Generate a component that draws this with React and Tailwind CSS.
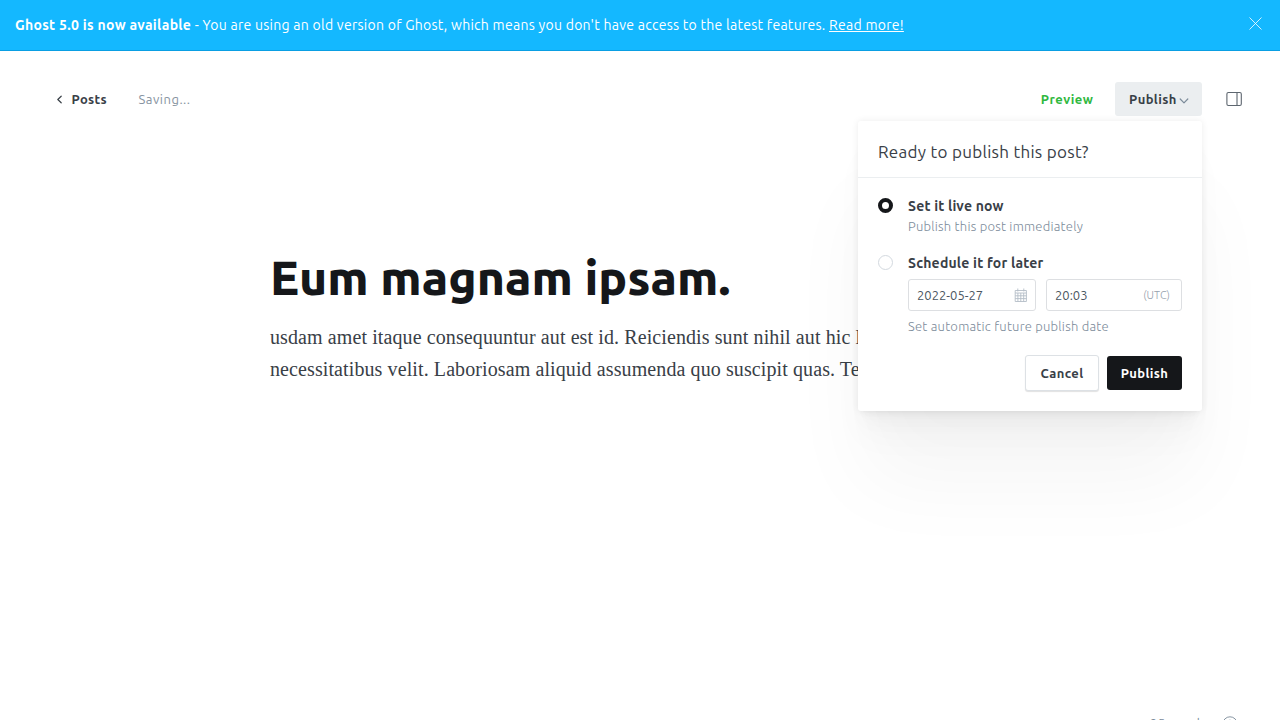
import React from "react";

function Banner() {
  return (
    <div className="flex h-[51px] shrink-0 items-center justify-between border-b border-[#0a9fe3] bg-[#14b8ff] pr-[18px] pl-[15px] text-[14px] text-white">
      <p className="tracking-[0.27px]">
        <strong className="font-bold tracking-[0.3px]">Ghost 5.0 is now available</strong> - You are using an old version of Ghost, which
        means you don't have access to the latest features.{" "}
        <a className="underline">Read more!</a>
      </p>
      <svg className="-mt-[3px] size-[13px]" viewBox="0 0 13 13" fill="none" stroke="currentColor" strokeWidth="0.8">
        <path d="M0.5 0.5l12 12M12.5 0.5l-12 12" />
      </svg>
    </div>
  );
}

function Toolbar() {
  return (
    <header className="flex h-[34px] items-center justify-between pr-[37px] pl-[56px] text-[13px]">
      <div className="flex items-center">
        <svg className="h-[9px] w-[7px]" viewBox="0 0 7 9" fill="none" stroke="#394047" strokeWidth="1.2" strokeLinecap="round" strokeLinejoin="round">
          <path d="M5.2 1.2L1.8 4.5l3.4 3.3" />
        </svg>
        <span className="mt-px ml-[8.5px] font-[570] tracking-[0.35px]">Posts</span>
        <span className="mt-px ml-[31.5px] tracking-[0.5px] text-[#8794a1]">Saving...</span>
      </div>
      <div className="flex items-center">
        <span className="mt-px mr-[21.5px] font-[570] tracking-[0.5px] text-[#30b840]">Preview</span>
        <button className="mr-[23px] flex h-[34px] w-[87px] items-center rounded-[3px] bg-[#ebeef0] pl-[14px] font-[570] tracking-[0.4px]">
          <span className="mt-px">Publish</span>
          <svg className="mt-[3px] ml-[2px] h-[6px] w-[10px]" viewBox="0 0 10 6" fill="none" stroke="#7c8b9a" strokeWidth="1.2" strokeLinecap="round" strokeLinejoin="round">
            <path d="M1.2 1L5 4.8 8.8 1" />
          </svg>
        </button>
        <svg className="h-[16px] w-[18px]" viewBox="0 0 18 16" fill="none" stroke="#5d666f" strokeWidth="1.1">
          <rect x="1.9" y="1.5" width="14.4" height="13" rx="1.5" />
          <path d="M12 1.5v13" />
        </svg>
      </div>
    </header>
  );
}

function CalendarIcon() {
  return (
    <svg className="h-[14px] w-[13px]" viewBox="0 0 13 14" fill="none" stroke="#b4bdc7" strokeWidth="0.9">
      <path d="M1.2 2.5h11.2v11H1.2zM1.2 5h11.2M1.2 7.8h11.2M1.2 10.6h11.2M3.9 5v8.5M6.8 5v8.5M9.7 5v8.5M3.8 0.5v3M9.8 0.5v3" />
    </svg>
  );
}

function PublishMenu() {
  return (
    <div className="absolute top-[121px] left-[858px] h-[290px] w-[344px] rounded-[3px] bg-white shadow-[0_0_7px_rgba(0,0,0,0.08),0_2.1px_2.2px_-5px_rgba(0,0,0,0.011),0_5.1px_5.3px_-5px_rgba(0,0,0,0.016),0_9.5px_10px_-5px_rgba(0,0,0,0.02),0_17px_17.9px_-5px_rgba(0,0,0,0.024),0_31.8px_33.4px_-5px_rgba(0,0,0,0.029),0_76px_80px_-5px_rgba(0,0,0,0.04)]">
      <h3 className="h-[57px] border-b border-[#ebeef0] pt-[19px] pl-[20px] text-[17px] leading-[24px] tracking-[0.3px]">
        Ready to publish this post?
      </h3>
      <div className="flex pt-[18px] pl-[20px]">
        <span className="mt-[2px] size-[15px] rounded-full border-[4px] border-[#15171a] bg-white" />
        <div className="ml-[15px] text-[13px] leading-[20px]">
          <div className="text-[14px] font-[570] tracking-[0.2px]">Set it live now</div>
          <div className="mb-px font-light tracking-[0.23px] text-[#7c8b9a]">Publish this post immediately</div>
        </div>
      </div>
      <div className="flex pt-[16px] pl-[20px]">
        <span className="mt-[2px] size-[15px] rounded-full border border-[#d3d9df] bg-white" />
        <div className="ml-[15px] text-[13px] leading-[20px]">
          <div className="text-[14px] font-[570] tracking-[0.2px]">Schedule it for later</div>
          <div className="mt-[6px] flex gap-[10px] text-[#4b5661]">
            <div className="flex h-[32px] w-[128px] items-center justify-between rounded-[3px] border border-[#dddfe2] pr-[8px] pl-[8px]">
              2022-05-27
              <CalendarIcon />
            </div>
            <div className="flex h-[32px] w-[136px] items-center justify-between rounded-[3px] border border-[#dddfe2] pr-[11px] pl-[8px]">
              20:03
              <span className="text-[11px] font-light text-[#95a1ad]">(UTC)</span>
            </div>
          </div>
          <div className="mt-[5px] mb-px font-light tracking-[0.23px] text-[#7c8b9a]">Set automatic future publish date</div>
        </div>
      </div>
      <div className="mt-[18px] flex items-center justify-end gap-[8px] pr-[20px] text-[13px] font-[570] tracking-[0.4px]">
        <button className="h-[36px] w-[74px] rounded-[3px] border border-[#dde1e5] bg-white pt-[2px] shadow-[0_1px_1px_rgba(0,0,0,0.12)]">Cancel</button>
        <button className="h-[34px] w-[75px] rounded-[3px] bg-[#15171a] pt-[2px] text-white">Publish</button>
      </div>
    </div>
  );
}

function Footer() {
  return (
    <div className="absolute top-[713px] right-[42px] flex items-center text-[13px] leading-[20px] text-[#7c8b9a]">
      <span className="tracking-[0.3px]">25 words</span>
      <svg className="mt-px ml-[16px] size-[16px]" viewBox="0 0 16 16" fill="none" stroke="#7c8b9a" strokeWidth="0.9">
        <circle cx="8" cy="8" r="7.2" />
        <path d="M6 6.2a2 2 0 1 1 2.6 1.9c-.4.2-.6.5-.6 1.1M8 11v1" />
      </svg>
    </div>
  );
}

export default function App() {
  return (
    <div className="relative flex h-[720px] w-[1280px] flex-col overflow-hidden bg-white font-[Ubuntu,'Noto_Sans',sans-serif] text-[#394047]">
      <Banner />
      <div className="pt-[31px]">
        <Toolbar />
      </div>
      <main className="mx-auto w-[740px] pt-[133px]">
        <h1 className="text-[48px] leading-[56px] font-extrabold whitespace-nowrap text-[#15171a]">Eum magnam ipsam.</h1>
        <p className="mt-[16px] font-['Liberation_Serif',serif] text-[20px] leading-[32px] tracking-[0.1px] whitespace-nowrap">
          usdam amet itaque consequuntur aut est id. Reiciendis sunt nihil aut hic l
          <br />
          necessitatibus velit. Laboriosam aliquid assumenda quo suscipit quas. Te
        </p>
      </main>
      <PublishMenu />
      <Footer />
    </div>
  );
}
